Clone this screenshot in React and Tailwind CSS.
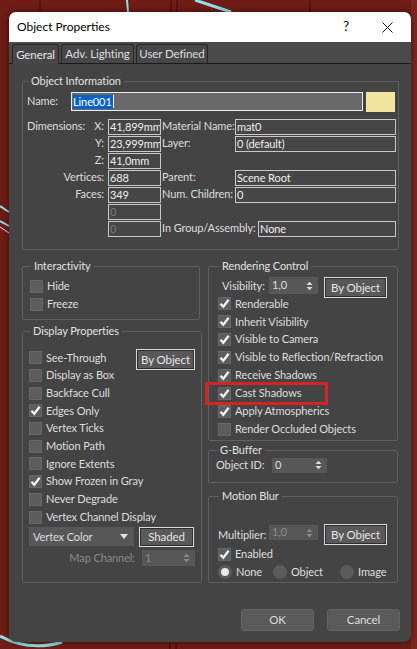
import React from "react";

// ── small widgets ────────────────────────────────────────────────────────────
const Tick = () => (
  <svg width="11" height="11" viewBox="0 0 11 11">
    <path d="M1.5 5.8 L4.3 8.8 L9.6 1.8" fill="none" stroke="#f4f4f4" strokeWidth="2.3" />
  </svg>
);

const Check = ({ on, label, h = "h-[17.7px]" }) => (
  <div className={`flex items-center gap-[4px] ${h}`}>
    <span className="w-[13px] h-[13px] bg-[#5d5d5d] border border-[#666666] flex items-center justify-center shrink-0">
      {on && <Tick />}
    </span>
    <span className="whitespace-nowrap">{label}</span>
  </div>
);

const Radio = ({ on, label }) => (
  <div className="flex items-center gap-[4px]">
    <span className="w-[14px] h-[14px] rounded-full bg-[#5b5b5b] flex items-center justify-center">
      {on && <span className="w-[8px] h-[8px] rounded-full bg-[#e8e8e8]" />}
    </span>
    <span>{label}</span>
  </div>
);

const Arrows = ({ dim }) => (
  <svg width="7" height="10" viewBox="0 0 7 10">
    <path d="M0.5 4 L3.5 0.8 L6.5 4 Z M0.5 6 L3.5 9.2 L6.5 6 Z" fill={dim ? "#8a8a8a" : "#dcdcdc"} />
  </svg>
);

const Spinner = ({ value, className = "", dim }) => (
  <div className={`flex items-center justify-between bg-[#575757] pl-[3px] pr-[5px] ${dim ? "text-[#8a8a8a]" : ""} ${className}`}>
    <span>{value}</span>
    <Arrows dim={dim} />
  </div>
);

const Btn = ({ children, className = "" }) => (
  <div className={`flex items-center justify-center border border-[#dadada] bg-[#595959] shadow-[inset_0_0_0_1px_#2e2e2e] text-[#e6e6e6] text-[11.5px] ${className}`}>
    {children}
  </div>
);

const Box = ({ children, className = "", dim }) => (
  <div className={`h-[16px] border border-[#c8c8c8] bg-[#464646] pl-[1px] leading-[14px] overflow-hidden whitespace-nowrap ${dim ? "text-[#7a7a7a]" : "text-[#f0f0f0]"} ${className}`}>
    {children}
  </div>
);

const Group = ({ title, className = "", children }) => (
  <fieldset className={`border border-[#5f5f5f] rounded-[2px] ${className}`}>
    <legend className="ml-[1px] px-[3px] leading-[14px] text-[#e2e2e2]">{title}</legend>
    {children}
  </fieldset>
);

// ── backdrop (viewport behind the dialog) ───────────────────────────────────
const Backdrop = () => (
  <svg className="absolute inset-0" width="417" height="649" viewBox="0 0 417 649">
    <rect x="0" y="0" width="417" height="649" fill="#6f1c16" />
    <rect x="411" y="0" width="6" height="649" fill="#7b2620" />
    <path d="M40 0 V12 M171 0 V12 M177 0 V12 M310 0 V12" stroke="#3e0d0a" strokeWidth="1" />
    <path d="M127 0 L128 12" stroke="#8fe0e8" strokeWidth="2" />
    <path d="M195 0 L231 12" stroke="#8fe0e8" strokeWidth="3" />
    <path d="M0 206 L9 212 M0 221 L9 226" stroke="#8fe0e8" strokeWidth="2" />
    <path d="M0 227 L9 233" stroke="#e8e8e8" strokeWidth="1" />
    <path d="M0 636 Q30 652 62 642" fill="none" stroke="#8fe0e8" strokeWidth="3" />
    <path d="M170 643 V649 M176 643 V649" stroke="#3e0d0a" strokeWidth="1" />
  </svg>
);

export default function App() {
  return (
    <div className="relative w-[417px] h-[649px] overflow-hidden pl-[9px] pt-[12px] font-['Lato',sans-serif] text-[11px] tracking-[-0.1px] text-[#dedede]">
      <Backdrop />

      <div className="relative w-[402px] h-[630px] rounded-[7px] bg-[#444444] overflow-hidden flex flex-col shadow-[0_0_6px_rgba(0,0,0,0.5)]">
        {/* ── Title bar ── */}
        <div className="h-[30px] bg-white flex items-center pl-[8px] pr-[18px] text-black text-[12px] tracking-normal">
          <span className="flex-1">Object Properties</span>
          <span className="text-[13px]">?</span>
          <svg className="ml-[33px]" width="11" height="11" viewBox="0 0 11 11">
            <path d="M0.5 0.5 L10.5 10.5 M10.5 0.5 L0.5 10.5" stroke="#111" strokeWidth="1" />
          </svg>
        </div>

        {/* ── Tabs ── */}
        <div className="h-[22px] bg-[#4a4a4a] border-b border-[#1c1c1c] flex items-end pl-[3px] gap-[2px] text-[11.5px]">
          <div className="w-[47px] h-[20px] -mb-[1px] bg-[#474747] border border-b-0 border-[#262626] rounded-t-[3px] flex items-center justify-center text-[#e8e8e8] whitespace-nowrap">
            General
          </div>
          <div className="w-[73px] h-[19px] bg-[#474747] border border-b-0 border-[#262626] rounded-t-[3px] flex items-center justify-center whitespace-nowrap">
            Adv. Lighting
          </div>
          <div className="w-[72px] h-[19px] bg-[#474747] border border-b-0 border-[#262626] rounded-t-[3px] flex items-center justify-center whitespace-nowrap">
            User Defined
          </div>
        </div>

        {/* ── Content ── */}
        <div className="flex-1 px-[13px] pt-[10px] flex flex-col">
          <Group title="Object Information" className="h-[176px] pl-[4px] pr-[2px]">
            <div className="mt-[4px] flex items-center h-[19px]">
              <span className="w-[44px]">Name:</span>
              <div className="w-[292px] h-[19px] border border-[#ececec] bg-[#6a6a6a] flex items-center pl-[1px]">
                <span className="bg-[#0b62c4] text-white leading-[14px] pr-[1px]">Line001</span>
                <span className="w-[1px] h-[13px] bg-white" />
              </div>
              <div className="ml-[3px] w-[29px] h-[20px] bg-[#f1e3a0]" />
            </div>

            <div className="mt-[7px] flex flex-col">
              {[
                ["Dimensions:", "X:", "41,899mm", "Material Name:", "mat0"],
                ["", "Y:", "23,999mm", "Layer:", "0 (default)"],
                ["", "Z:", "41,0mm", null, null],
                ["", "Vertices:", "688", "Parent:", "Scene Root"],
                ["", "Faces:", "349", "Num. Children:", "0"],
                ["", "", "0", null, null, true],
                ["", "", "0", "In Group/Assembly:", "None", true],
              ].map(([a, b, v, rl, rv, dim], i) => (
                <div key={i} className="h-[17px] flex items-center">
                  <div className="w-[77px] flex justify-between whitespace-nowrap">
                    <span>{a}</span>
                    <span>{b}</span>
                  </div>
                  <Box dim={dim} className="ml-[4px] w-[53px]">{v}</Box>
                  {rl && (
                    <>
                      <span className={`ml-[1px] whitespace-nowrap ${rv === "None" ? "w-[96px]" : "w-[73px]"}`}>{rl}</span>
                      <Box className={rv === "None" ? "w-[138px]" : "w-[161px]"}>{rv}</Box>
                    </>
                  )}
                </div>
              ))}
            </div>
          </Group>

          {/* ── Two columns ── */}
          <div className="mt-[9px] flex gap-[8px]">
            {/* left */}
            <div className="w-[178px] flex flex-col gap-[4px]">
              <Group title="Interactivity" className="h-[61px] pl-[7px]">
                <div className="mt-[4px]">
                  <Check label="Hide" h="h-[18px]" />
                  <Check label="Freeze" h="h-[18px]" />
                </div>
              </Group>

              <Group title="Display Properties" className="h-[259px] pl-[6px] pr-[6px]">
                <div className="mt-[11px] flex flex-col">
                  <div className="flex items-center justify-between h-[17.7px]">
                    <Check label="See-Through" />
                    <Btn className="w-[59px] h-[21px] mt-[3px]">By Object</Btn>
                  </div>
                  <Check label="Display as Box" />
                  <Check label="Backface Cull" />
                  <Check on label="Edges Only" />
                  <Check label="Vertex Ticks" />
                  <Check label="Motion Path" />
                  <Check label="Ignore Extents" />
                  <Check on label="Show Frozen in Gray" />
                  <Check label="Never Degrade" />
                  <Check label="Vertex Channel Display" />
                </div>
                <div className="mt-[1px] flex items-center">
                  <div className="w-[105px] h-[19px] bg-[#575757] flex items-center justify-between pl-[4px] pr-[6px]">
                    <span>Vertex Color</span>
                    <svg width="8" height="5" viewBox="0 0 8 5">
                      <path d="M0 0 H8 L4 5 Z" fill="#e0e0e0" />
                    </svg>
                  </div>
                  <Btn className="ml-[5px] w-[55px] h-[20px]">Shaded</Btn>
                </div>
                <div className="mt-[3px] flex items-center h-[17px] text-[#8a8a8a]">
                  <span className="w-[106px] text-right">Map Channel:</span>
                  <Spinner dim value="1" className="ml-[7px] w-[53px] h-[16px] bg-[#4f4f4f]" />
                </div>
              </Group>
            </div>

            {/* right */}
            <div className="flex-1 flex flex-col">
              <Group title="Rendering Control" className="h-[182px] pl-[9px]">
                <div className="mt-[4px] flex items-start h-[18px]">
                  <span className="ml-[4px] w-[47px] leading-[18px]">Visibility:</span>
                  <Spinner value="1,0" className="w-[49px] h-[17px]" />
                  <Btn className="ml-[6px] w-[63px] h-[21px]">By Object</Btn>
                </div>
                {[
                  "Renderable",
                  "Inherit Visibility",
                  "Visible to Camera",
                  "Visible to Reflection/Refraction",
                  "Receive Shadows",
                  "Cast Shadows",
                  "Apply Atmospherics",
                ].map((l) => (
                  <Check key={l} on label={l} h="h-[17.9px]" />
                ))}
                <Check label="Render Occluded Objects" h="h-[17.9px]" />
              </Group>

              <Group title="G-Buffer" className="mt-[2px] h-[40px] pl-[7px]">
                <div className="flex items-center h-[16px]">
                  <span className="w-[56px]">Object ID:</span>
                  <Spinner value="0" className="w-[55px] h-[15px]" />
                </div>
              </Group>

              <Group title="Motion Blur" className="mt-[6px] h-[94px] pl-[9px]">
                <div className="mt-[21px] flex items-start h-[21px]">
                  <span className="w-[51px] leading-[21px]">Multiplier:</span>
                  <Spinner dim value="1,0" className="w-[49px] h-[15px] mt-[1px] bg-[#505050]" />
                  <Btn className="ml-[6px] w-[63px] h-[21px]">By Object</Btn>
                </div>
                <Check on label="Enabled" h="h-[18px]" />
                <div className="flex items-center h-[18px]">
                  <div className="w-[55px]"><Radio on label="None" /></div>
                  <div className="w-[67px]"><Radio label="Object" /></div>
                  <Radio label="Image" />
                </div>
              </Group>
            </div>
          </div>

          {/* ── Footer buttons ── */}
          <div className="mt-[26px] -mr-[2px] flex justify-end gap-[13px] text-[11.5px]">
            <div className="w-[73px] h-[22px] rounded-[3px] bg-[#5a5a5a] border border-[#646464] flex items-center justify-center">OK</div>
            <div className="w-[73px] h-[22px] rounded-[3px] bg-[#5a5a5a] border border-[#646464] flex items-center justify-center">Cancel</div>
          </div>
        </div>
      </div>

      {/* red annotation frame */}
      <div className="absolute left-[205px] top-[382px] w-[123px] h-[23px] border-[3px] border-[#d42424]" />
    </div>
  );
}
